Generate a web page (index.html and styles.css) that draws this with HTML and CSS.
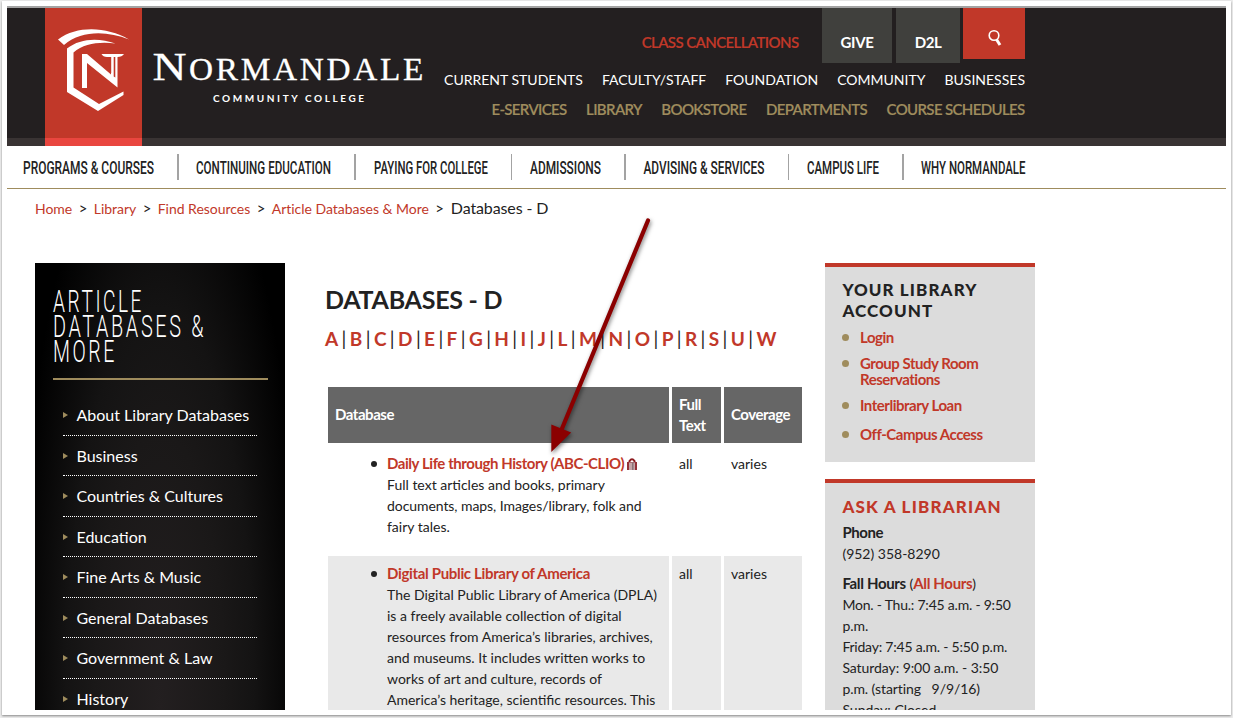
FILE: index.html
```html
<!DOCTYPE html>
<html lang="en">
<head>
<meta charset="utf-8">
<title>Databases - D | Normandale Community College</title>
<link rel="stylesheet" href="styles.css">
</head>
<body>
<div class="window">
<div class="page">
<header class="header">
  <div class="brand">
    <div class="crest">
      <svg width="97" height="138" viewBox="45 8 97 138" fill="#fff">
        <path d="M58 39.500C78 25 107 27 129 39.500C107 31 82 30 64 45Z"/>
        <path d="M67 48.500C80 38 99 37.500 115.500 43.500C99 41.500 84 43.500 73.500 52.500V87.500L99 104L123.500 91.500V95L98 111L67 92Z"/>
        <path d="M82 88V54H87L111 74.500V57H107Q103 57 101.500 54H124Q122 57 117.500 57V87.500L87 63V88Z"/>
        <path d="M109.300 57V71.500L111.200 73V57ZM113.700 57V76.500L115.300 77.500V57Z" fill="#c13829"/>
      </svg>
    </div>
    <svg class="wordmark" width="280" height="60" viewBox="150 48 280 60" fill="#fff">
      <text class="serif" x="152.500" y="80" font-size="39" textLength="34" lengthAdjust="spacingAndGlyphs">N</text>
      <text class="serif caps" x="189" y="80" font-size="31" textLength="237" lengthAdjust="spacingAndGlyphs">ORMANDALE</text>
      <text class="sub" x="213" y="101.800" font-size="10" textLength="151" lengthAdjust="spacing">COMMUNITY COLLEGE</text>
    </svg>
  </div>
  <div class="menus">
    <div class="row-top">
      <a class="cancel">CLASS CANCELLATIONS</a>
      <a class="tab give">GIVE</a>
      <a class="tab d2l">D2L</a>
      <a class="search"><svg width="16" height="18" viewBox="0 0 16 18"><circle cx="7" cy="6.500" r="4.800" fill="none" stroke="#fff" stroke-width="1.600"/><path d="M9.500 10.500L13 16" stroke="#fff" stroke-width="3" fill="none"/></svg></a>
    </div>
    <div class="row-mid"><a>CURRENT STUDENTS</a><a>FACULTY/STAFF</a><a>FOUNDATION</a><a>COMMUNITY</a><a>BUSINESSES</a></div>
    <div class="row-low"><a>E-SERVICES</a><a>LIBRARY</a><a>BOOKSTORE</a><a>DEPARTMENTS</a><a>COURSE SCHEDULES</a></div>
  </div>
</header>
<nav class="nav">
  <a><svg width="131" height="26"><text x="0" y="20" textLength="131" lengthAdjust="spacingAndGlyphs">PROGRAMS &amp; COURSES</text></svg></a>
  <a><svg width="135" height="26"><text x="0" y="20" textLength="135" lengthAdjust="spacingAndGlyphs">CONTINUING EDUCATION</text></svg></a>
  <a class="wide"><svg width="114" height="26"><text x="0" y="20" textLength="114" lengthAdjust="spacingAndGlyphs">PAYING FOR COLLEGE</text></svg></a>
  <a class="thin"><svg width="71" height="26"><text x="0" y="20" textLength="71" lengthAdjust="spacingAndGlyphs">ADMISSIONS</text></svg></a>
  <a><svg width="122" height="26"><text x="0.500" y="20" textLength="121" lengthAdjust="spacingAndGlyphs">ADVISING &amp; SERVICES</text></svg></a>
  <a class="thin"><svg width="72" height="26"><text x="0" y="20" textLength="72" lengthAdjust="spacingAndGlyphs">CAMPUS LIFE</text></svg></a>
  <a><svg width="105" height="26"><text x="0" y="20" textLength="104.500" lengthAdjust="spacingAndGlyphs">WHY NORMANDALE</text></svg></a>
</nav>
<div class="crumbs"><a>Home</a><i>&gt;</i><a>Library</a><i>&gt;</i><a>Find Resources</a><i>&gt;</i><a>Article Databases &amp; More</a><i>&gt;</i><span>Databases - D</span></div>
<main class="columns">
  <aside class="side">
    <svg class="side-title" width="215" height="88" fill="#fff">
      <text x="0" y="32" textLength="91" lengthAdjust="spacingAndGlyphs">ARTICLE</text>
      <text x="0" y="57" textLength="153" lengthAdjust="spacingAndGlyphs">DATABASES &amp;</text>
      <text x="0" y="82" textLength="64" lengthAdjust="spacingAndGlyphs">MORE</text>
    </svg>
    <ul class="side-list">
      <li>About Library Databases</li><li>Business</li><li>Countries &amp; Cultures</li><li>Education</li><li>Fine Arts &amp; Music</li><li>General Databases</li><li>Government &amp; Law</li><li>History</li>
    </ul>
  </aside>
  <section class="content">
    <h1>DATABASES - D</h1>
    <div class="letters"><a>A</a>|<a>B</a>|<a>C</a>|<a>D</a>|<a>E</a>|<a>F</a>|<a>G</a>|<a>H</a>|<a>I</a>|<a>J</a>|<a>L</a>|<a>M</a>|<a>N</a>|<a>O</a>|<a>P</a>|<a>R</a>|<a>S</a>|<a>U</a>|<a>W</a></div>
    <div class="table">
      <div class="th">Database</div><div class="th">Full<br>Text</div><div class="th">Coverage</div>
      <div class="td entry"><b>Daily Life through History (ABC-CLIO)</b><svg class="lock" width="10" height="13" viewBox="0 0 10 13"><path d="M2.500 5V3Q5 -0.500 7.500 3V5" fill="none" stroke="#8d1c20" stroke-width="2"/><path d="M0 4H10V12H0Z" fill="#943038"/><path d="M2 4.500H8V12H2Z" fill="#c4a5a8"/><path d="M5 4.500H6.500V12H5Z" fill="#8b7377"/></svg><br>Full text articles and books, primary<br><span class="snug">documents, maps, Images/library, folk and</span><br>fairy tales.</div>
      <div class="td">all</div><div class="td">varies</div>
      <div class="td entry alt"><b class="looser">Digital Public Library of America</b><br>The Digital Public Library of America (DPLA)<br>is a freely available collection of digital<br>resources from America’s libraries, archives,<br>and museums. It includes written works to<br>works of art and culture, records of<br>America’s heritage, scientific resources. This</div>
      <div class="td alt">all</div><div class="td alt">varies</div>
    </div>
  </section>
  <aside class="right">
    <section class="box account">
      <h2>YOUR LIBRARY<br>ACCOUNT</h2>
      <ul><li>Login</li><li>Group Study Room<br>Reservations</li><li>Interlibrary Loan</li><li>Off-Campus Access</li></ul>
    </section>
    <section class="box ask">
      <h2>ASK A LIBRARIAN</h2>
      <p><b>Phone</b><br>(952) 358-8290</p>
      <p><b class="looser">Fall Hours</b> (<b class="red looser">All Hours</b>)<br><span class="tight">Mon. - Thu.: 7:45 a.m. - 9:50</span><br>p.m.<br><span class="tight">Friday: 7:45 a.m. - 5:50 p.m.</span><br><span class="snug">Saturday: 9:00 a.m. - 3:50</span><br><span class="snug">p.m. (starting &nbsp; 9/9/16)</span><br>Sunday: Closed</p>
    </section>
  </aside>
</main>
</div>
</div>
<svg class="arrow" width="120" height="250" viewBox="540 210 120 250" fill="#8b0000"><path d="M648 220.500L561 431" stroke="#8b0000" stroke-width="4.200" stroke-linecap="round"/><path d="M551.300 452V424.500L571.200 432.500Z"/></svg>
</body>
</html>
```
FILE: styles.css
```css
* { box-sizing: border-box; }
body { margin: 0; height: 718px; overflow: hidden; position: relative; background: #ececec; padding: 1px 2px 3px; font-family: Lato, sans-serif; font-size: 14px; line-height: 21px; color: #222; }
svg { overflow: visible; }
.window { height: 714px; background: #fff; box-shadow: 0 1px 2px 0 #888; padding: 5px 5px 0; }
.page { height: 704px; overflow: hidden; border-top: 2px solid #a3a3a3; }
.header { height: 138px; background: #231f20; border-bottom: 8px solid #393333; display: flex; }
.brand { display: flex; width: 423px; padding-left: 38px; flex: none; }
.crest { width: 97px; height: 138px; background: #c13829; border-bottom: 8px solid #e9463f; overflow: hidden; flex: none; }
.crest svg { display: block; }
.wordmark { margin: 40px 0 0 8px; flex: none; }
.serif { font-family: "Liberation Serif", serif; stroke: #fff; stroke-width: .3px; }
.caps { letter-spacing: 2.5px; }
.sub { font-family: Lato, sans-serif; font-weight: 700; }
.menus { width: 595px; }
.row-top { display: flex; justify-content: flex-end; height: 55px; color: #c13829; font-weight: 600; font-size: 15px; white-space: nowrap; }
.row-top a { padding-top: 24px; }
.row-top .cancel { margin-right: 23.500px; letter-spacing: -.6px; -webkit-text-stroke: .15px currentColor; }
.row-top .tab { background: #40403d; color: #fff; text-align: center; font-weight: 700; height: 55px; margin-right: 4px; letter-spacing: -.4px; }
.give { width: 70px; }
.row-top .d2l { width: 64px; margin-right: 3px; }
.row-top .search { width: 62px; height: 51px; background: #c13829; padding: 21px 0 0 24px; line-height: 0; }
.row-mid, .row-low { display: flex; justify-content: flex-end; gap: 19px; white-space: nowrap; }
.row-mid { color: #fff; margin-top: 6px; }
.row-low { color: #9f8c5d; font-weight: 600; font-size: 15px; margin-top: 9px; letter-spacing: -.65px; gap: 19.500px; padding-right: .5px; -webkit-text-stroke: .15px currentColor; }
.nav { height: 43px; border-bottom: 1px solid #9f8c5d; padding: 8px 0 0 16px; display: flex; gap: 23px; }
.nav a { height: 26px; border-left: 2px solid #a3a3a3; padding-left: 17px; }
.nav a:first-child { border: 0; padding: 0; }
.nav .thin { border-left-width: 1px; padding-left: 18px; }
.nav .wide { padding-left: 18px; }
.nav svg { display: block; }
.nav text { font: 500 17.500px Roboto, sans-serif; fill: #222; }
.crumbs { display: flex; padding: 9px 0 0 28px; height: 74px; white-space: nowrap; }
.crumbs a { color: #c13829; letter-spacing: -.02px; }
.crumbs i { font-style: normal; margin: 0 6.400px; font-size: 15px; line-height: 20px; }
.crumbs span { font-size: 16px; letter-spacing: -.12px; line-height: 20px; margin-left: .5px; }
.columns { display: flex; padding-left: 28px; }
.side { width: 250px; height: 447px; overflow: hidden; background: radial-gradient(ellipse 145px 620px at 50% 100%, #231f20, #1a1818 45%, #141313 65%, #000); padding: 17px 17px 0 18px; color: #fff; }
.side-title { display: block; }
.side-title text { font: 300 30.500px Roboto, sans-serif; letter-spacing: 4px; }
.side-list { list-style: none; margin: 10px 0 0; padding: 15.400px 11px 0 10px; border-top: 2px solid #9f8c5d; }
.side-list li { height: 40.500px; font-size: 16px; line-height: 40px; border-bottom: 1px dotted #fff; display: flex; align-items: center; gap: 8.500px; white-space: nowrap; }
.side-list li::before { content: ""; border-left: 5px solid #9f8c5d; border-top: 3.500px solid transparent; border-bottom: 3.500px solid transparent; }
.content { width: 480px; margin-left: 40px; padding-top: 21px; }
h1 { font-size: 25px; line-height: 30px; margin: 0; font-weight: 700; white-space: nowrap; letter-spacing: -.25px; }
.letters { display: flex; justify-content: space-between; width: 452px; font-size: 19px; line-height: 24px; margin-top: 13px; }
.letters a { color: #c13829; font-weight: 700; }
.table { display: grid; grid-template-columns: 341px 49px 78px; grid-template-rows: 56px 107px auto; gap: 3px; margin: 36px 0 0 3px; white-space: nowrap; }
.th { background: #666; color: #fff; font-weight: 700; font-size: 15px; letter-spacing: -.45px; padding: 0 7px 1px; display: flex; align-items: center; }
.td { padding: 7px; }
.alt { background: #e9e9e9; }
.entry { padding-left: 59px; position: relative; }
.entry::before { content: ""; position: absolute; left: 43px; top: 15px; width: 6px; height: 6px; border-radius: 50%; background: #222; }
b { font-size: 15px; letter-spacing: -.44px; line-height: 20px; }
.looser { letter-spacing: -.33px; }
.snug { letter-spacing: -.07px; }
.tight { letter-spacing: -.22px; }
.entry b, .red { color: #c13829; }
.lock { vertical-align: -2px; margin: -2px 0 0 3px; }
.right { width: 210px; margin-left: 20px; }
.box { background: #dcdcdc; border-top: 4px solid #c13829; padding: 12px 17px 0; white-space: nowrap; }
.account { height: 199px; }
.ask { height: 260px; margin-top: 17px; }
.ask p, h2 { padding-left: .4px; }
h2 { margin: 0; font-size: 17px; line-height: 21px; font-weight: 900; letter-spacing: 1.100px; }
.ask h2 { color: #c13829; margin: 1px 0 5px; letter-spacing: 1.200px; }
.box ul { list-style: none; margin: 8px 0 0; padding: 0; font-size: 15px; letter-spacing: -.48px; line-height: 16px; color: #c13829; font-weight: 700; }
.box li { display: flex; gap: 11px; margin-bottom: 10px; }
.box li:nth-child(3) { margin-bottom: 13px; }
.box li::before { content: ""; width: 7px; height: 7px; margin-top: 5px; border-radius: 50%; background: #9f8c5d; }
.box p { margin: 0 0 9px; }
.arrow { position: absolute; left: 540px; top: 210px; filter: drop-shadow(1px 2px 2px rgba(0,0,0,.5)); }
```
